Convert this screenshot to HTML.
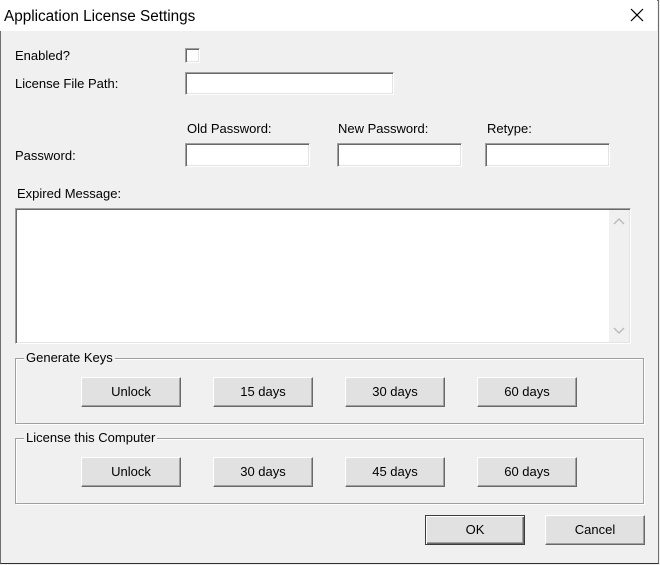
<!DOCTYPE html>
<html><head><style>
*{margin:0;padding:0;box-sizing:border-box}
body{width:660px;height:565px;background:#f0f0f0;position:relative;overflow:hidden;font-family:"Liberation Sans",Tahoma,sans-serif;font-size:13px;color:#000}
.win{position:absolute;left:0;top:0;width:659px;height:564px;border:1px solid #6e6e6e;border-bottom:1px solid #1f3347;background:#f0f0f0}
.title{position:absolute;left:0;top:0;width:657px;height:31px;background:#fff}
.title span{position:absolute;left:4px;top:8px;font-size:15.3px}
.x{position:absolute;left:630px;top:8px}
.a{position:absolute;white-space:nowrap}
.in{position:absolute;background:#fff;border-top:1px solid #a0a0a0;border-left:1px solid #a0a0a0;border-right:1px solid #fff;border-bottom:1px solid #fff;box-shadow:inset 1px 1px 0 #696969,inset -1px -1px 0 #e3e3e3}
.btn{position:absolute;width:100px;height:30px;background:#e1e1e1;border-top:1px solid #fff;border-left:1px solid #fff;border-right:1px solid #696969;border-bottom:1px solid #696969;box-shadow:inset -1px -1px 0 #a0a0a0,inset 1px 1px 0 #e3e3e3;text-align:center;line-height:27px}
.btn.def{border:1px solid #3c3c3c;box-shadow:inset 1px 1px 0 #fff,inset -1px -1px 0 #696969,inset -2px -2px 0 #a0a0a0}
.grp{position:absolute;border:1px solid #a0a0a0;box-shadow:1px 1px 0 #fff,inset 1px 1px 0 #fff}
.grp span{position:absolute;left:8px;top:-9px;background:#f0f0f0;padding:0 2px}
</style></head><body>
<div class="win"></div>
<div class="title"><span>Application License Settings</span>
<svg class="x" width="14" height="14" viewBox="0 0 14 14"><path d="M1 1L13 13M13 1L1 13" stroke="#000" stroke-width="1.2"/></svg></div>

<div class="a" style="left:15px;top:48px">Enabled?</div>
<div class="in" style="left:185px;top:48px;width:15px;height:15px"></div>
<div class="a" style="left:15px;top:76px">License File Path:</div>
<div class="in" style="left:185px;top:72px;width:209px;height:23px"></div>

<div class="a" style="left:187px;top:121px">Old Password:</div>
<div class="a" style="left:338px;top:121px">New Password:</div>
<div class="a" style="left:487px;top:121px">Retype:</div>
<div class="a" style="left:15px;top:148px">Password:</div>
<div class="in" style="left:185px;top:143px;width:125px;height:24px"></div>
<div class="in" style="left:337px;top:143px;width:125px;height:24px"></div>
<div class="in" style="left:485px;top:143px;width:125px;height:24px"></div>

<div class="a" style="left:17px;top:186px">Expired Message:</div>
<div class="in" style="left:15px;top:208px;width:616px;height:136px"></div>
<div style="position:absolute;left:609px;top:210px;width:20px;height:132px;background:#f0f0f0"></div>
<svg style="position:absolute;left:613px;top:217px" width="12" height="8"><path d="M1 7L6 2L11 7" stroke="#bcbcbc" stroke-width="1.5" fill="none"/></svg>
<svg style="position:absolute;left:613px;top:327px" width="12" height="8"><path d="M1 1L6 6L11 1" stroke="#bcbcbc" stroke-width="1.5" fill="none"/></svg>

<div class="grp" style="left:15px;top:358px;width:629px;height:66px"><span>Generate Keys</span></div>
<div class="btn" style="left:81px;top:377px">Unlock</div>
<div class="btn" style="left:213px;top:377px">15 days</div>
<div class="btn" style="left:345px;top:377px">30 days</div>
<div class="btn" style="left:477px;top:377px">60 days</div>

<div class="grp" style="left:15px;top:438px;width:629px;height:66px"><span>License this Computer</span></div>
<div class="btn" style="left:81px;top:457px">Unlock</div>
<div class="btn" style="left:213px;top:457px">30 days</div>
<div class="btn" style="left:345px;top:457px">45 days</div>
<div class="btn" style="left:477px;top:457px">60 days</div>

<div class="btn def" style="left:425px;top:515px">OK</div>
<div class="btn" style="left:545px;top:515px">Cancel</div>
</body></html>
